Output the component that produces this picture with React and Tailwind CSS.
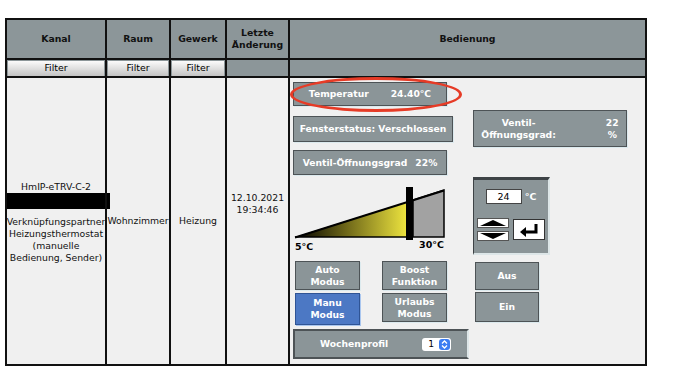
import React from 'react';

const btn = "flex items-center justify-center text-center text-white font-bold text-[9.2px] leading-[12px] bg-[#8b9598] border border-[#4d5356] shadow-[1px_1px_0_#dceaee]";

const FilterBtn = () => (
    <div className="mx-[1px] h-[15px] flex items-center justify-center bg-gradient-to-b from-[#fbfbfb] to-[#c4c4c4] text-[9.4px] text-black">Filter</div>
);

const Slider = () => (
    <svg width="156" height="78" viewBox="0 0 156 78" className="mt-[1px]">
        <defs>
            <linearGradient id="yel" x1="0" x2="1" y1="0" y2="0">
                <stop offset="0" stopColor="#000" />
                <stop offset="0.45" stopColor="#6b6418" />
                <stop offset="1" stopColor="#ebe23e" />
            </linearGradient>
        </defs>
        <polygon points="2,61 113,61 113,26" fill="url(#yel)" />
        <polygon points="120,61 151,61 151,14 120,24" fill="#a2a2a2" stroke="#000" strokeWidth="1.5" />
        <line x1="2" y1="61.5" x2="151" y2="14.5" stroke="#000" strokeWidth="2" />
        <line x1="2" y1="61" x2="113" y2="61" stroke="#000" strokeWidth="1.5" />
        <rect x="113" y="11" width="7" height="53" fill="#000" />
        <text x="2" y="74" fontSize="9.5" fontWeight="bold" fontFamily="DejaVu Sans">5°C</text>
        <text x="151" y="72" fontSize="9.5" fontWeight="bold" fontFamily="DejaVu Sans" textAnchor="end">30°C</text>
    </svg>
);

const Setpoint = () => (
    <div className="mt-[30px] w-[77px] h-[78px] bg-[#8b9598] border-t-[3px] border-l border-[#3e4346] border-r-2 border-b-2 border-r-[#dde6e8] border-b-[#dde6e8] flex flex-col items-center">
        <div className="flex items-center mt-[9px] gap-[3px]">
            <div className="w-[36px] h-[15px] bg-white border border-[#444] text-[9.5px] text-black flex items-center justify-center">24</div>
            <span className="text-white font-bold text-[9.5px]">°C</span>
        </div>
        <div className="flex items-center gap-[4px] mt-[14px]">
            <div className="flex flex-col gap-[3px]">
                <div className="w-[32px] h-[10px] bg-white border border-[#555] flex items-center justify-center">
                    <svg width="26" height="6" viewBox="0 0 26 6"><polygon points="0,6 26,6 13,0" fill="#000" /></svg>
                </div>
                <div className="w-[32px] h-[10px] bg-white border border-[#555] flex items-center justify-center">
                    <svg width="26" height="6" viewBox="0 0 26 6"><polygon points="0,0 26,0 13,6" fill="#000" /></svg>
                </div>
            </div>
            <div className="w-[32px] h-[21px] bg-white border border-[#333] flex items-center justify-center">
                <svg width="22" height="14" viewBox="0 0 22 14">
                    <path d="M18 1 V9 H7" stroke="#000" strokeWidth="3" fill="none" />
                    <polygon points="2,9 8,4 8,14" fill="#000" />
                </svg>
            </div>
        </div>
    </div>
);

const Bedienung = () => (
    <div className="relative flex pl-[3px] pt-[4px] pb-[5px]">
        <div className="w-[176px] flex flex-col">
            <div className={btn + " w-[154px] h-[24px] gap-[22px]"}><span>Temperatur</span><span>24.40°C</span></div>
            <div className={btn + " w-[160px] h-[26px] mt-[10px] whitespace-nowrap"}>Fensterstatus: Verschlossen</div>
            <div className={btn + " w-[154px] h-[25px] mt-[8px] gap-[8px]"}><span>Ventil-Öffnungsgrad</span><span>22%</span></div>
            <Slider />
            <div className="grid grid-cols-[65px_65px] gap-x-[22px] gap-y-[3px] ml-[2px] mt-[7px]">
                <div className={btn + " h-[29px]"}>Auto<br />Modus</div>
                <div className={btn + " h-[29px]"}>Boost<br />Funktion</div>
                <div className="flex items-center justify-center text-center text-white font-bold text-[9.2px] leading-[12px] h-[32px] bg-[#4c78c4] border border-[#2f5495] shadow-[1px_1px_0_#a9c6ef]">Manu<br />Modus</div>
                <div className={btn + " h-[29px]"}>Urlaubs<br />Modus</div>
            </div>
            <div className="mt-[4px] w-[176px] h-[30px] bg-[#8b9598] border-2 border-[#4d5356] border-r-[#dde6e8] flex items-center text-white font-bold text-[9.2px]">
                <span className="ml-[25px]">Wochenprofil</span>
                <div className="ml-[34px] w-[29px] h-[13px] bg-white rounded-[3px] flex items-center justify-between pl-[6px] pr-[1px] text-black font-normal">
                    <span>1</span>
                    <div className="w-[11px] h-[11px] rounded-[3px] bg-[#3b7df2] flex items-center justify-center">
                        <svg width="7" height="9" viewBox="0 0 7 9"><path d="M1 3.5 L3.5 1 L6 3.5 M1 5.5 L3.5 8 L6 5.5" stroke="#fff" strokeWidth="1.3" fill="none" /></svg>
                    </div>
                </div>
            </div>
        </div>
        <div className="ml-[4px] flex flex-col">
            <div className={btn + " w-[154px] h-[37px] mt-[28px] gap-[50px] border-[#3e4346]"}>
                <span>Ventil-<br />Öffnungsgrad:</span><span>22<br />%</span>
            </div>
            <Setpoint />
            <div className={btn + " w-[64px] h-[28px] mt-[7px] ml-[2px]"}>Aus</div>
            <div className={btn + " w-[64px] h-[30px] mt-[2px] ml-[2px]"}>Ein</div>
        </div>
        <div className="absolute left-[0px] -top-[1px] w-[172px] h-[35px] rounded-[50%] border-[3px] border-[#e63b26]" />
    </div>
);

const App = () => {
    return (
        <div className="w-[690px] h-[387px] bg-white pt-[18px] pl-[5px] font-['DejaVu_Sans',sans-serif] text-[#111]">
            <table className="table-fixed border-collapse w-[640px]">
                <colgroup>
                    <col className="w-[100px]" />
                    <col className="w-[64px]" />
                    <col className="w-[56px]" />
                    <col className="w-[63px]" />
                    <col className="w-[357px]" />
                </colgroup>
                <thead>
                    <tr className="h-[40px] bg-[#8c9699] text-[9.3px] font-bold leading-[12px]">
                        <th className="border-2 border-[#111]">Kanal</th>
                        <th className="border-2 border-[#111]">Raum</th>
                        <th className="border-2 border-[#111]">Gewerk</th>
                        <th className="border-2 border-[#111]">Letzte<br />Änderung</th>
                        <th className="border-2 border-[#111]">Bedienung</th>
                    </tr>
                    <tr className="h-[18px] bg-[#8c9699]">
                        <th className="border-2 border-[#111] p-0 font-normal"><FilterBtn /></th>
                        <th className="border-2 border-[#111] p-0 font-normal"><FilterBtn /></th>
                        <th className="border-2 border-[#111] p-0 font-normal"><FilterBtn /></th>
                        <th className="border-2 border-[#111]"></th>
                        <th className="border-2 border-[#111]"></th>
                    </tr>
                </thead>
                <tbody>
                    <tr className="bg-[#f0f0f0] text-[9.3px] leading-[12px] text-center">
                        <td className="border-2 border-[#111] p-0 align-middle">
                            <div className="pt-[3px]">HmIP-eTRV-C-2</div>
                            <div className="w-[104px] h-[16px] bg-black -ml-[1px]" />
                            <div className="mt-[7px] whitespace-nowrap -mx-[2px]">Verknüpfungspartner</div>
                            <div className="whitespace-nowrap">Heizungsthermostat<br />(manuelle<br />Bedienung, Sender)</div>
                        </td>
                        <td className="border-2 border-[#111] p-0 align-middle whitespace-nowrap">Wohnzimmer</td>
                        <td className="border-2 border-[#111] p-0 align-middle">Heizung</td>
                        <td className="border-2 border-[#111] p-0 align-middle"><div className="pb-[34px]">12.10.2021<br />19:34:46</div></td>
                        <td className="border-2 border-[#111] p-0 align-top"><Bedienung /></td>
                    </tr>
                </tbody>
            </table>
        </div>
    );
};

export default App;
